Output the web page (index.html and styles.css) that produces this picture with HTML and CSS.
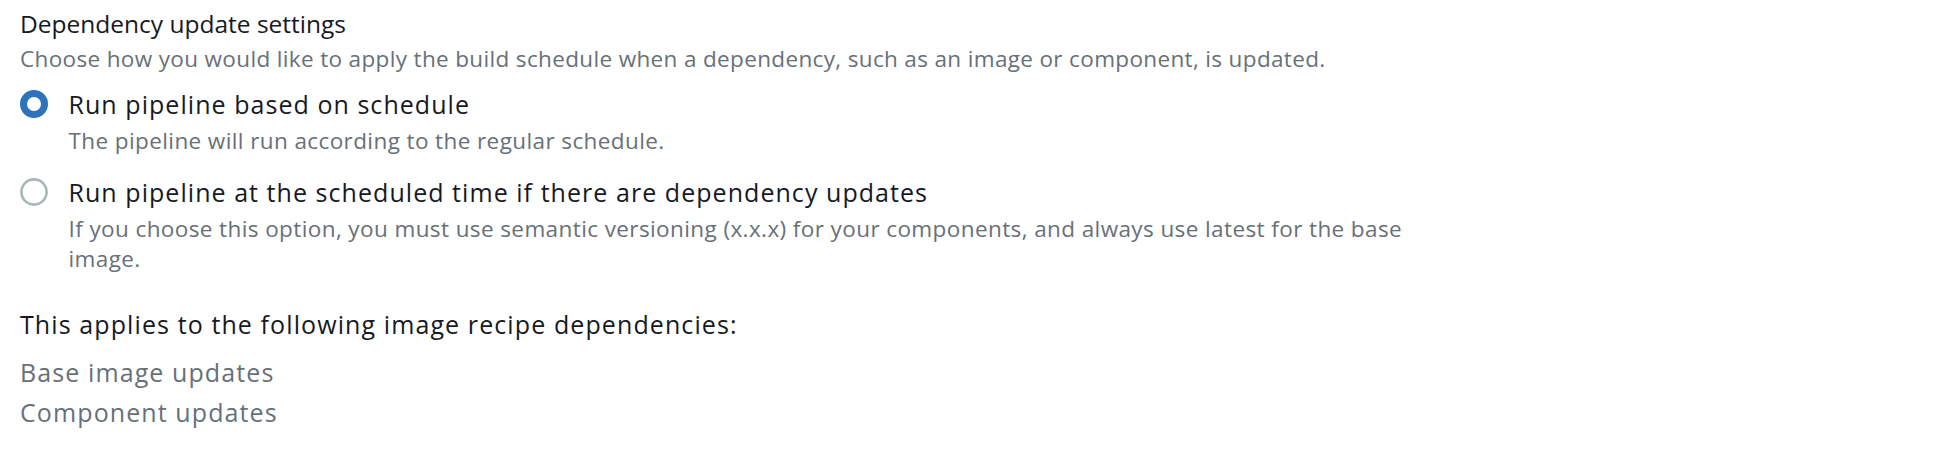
FILE: index.html
```html
<!DOCTYPE html>
<html lang="en">
<head>
<meta charset="utf-8">
<title>Dependency update settings</title>
<link rel="stylesheet" href="styles.css">
</head>
<body>
<div class="field">
  <div class="field-title">Dependency update settings</div>
  <div class="field-desc">Choose how you would like to apply the build schedule when a dependency, such as an image or component, is updated.</div>
  <div class="radio-group">
    <label class="radio">
      <span class="radio-control">
        <svg viewBox="0 0 16 16" width="28" height="28" aria-hidden="true"><circle cx="8" cy="8" r="6" fill="#fff" stroke="#2f72bc" stroke-width="4"/></svg>
      </span>
      <span class="radio-text">
        <span class="radio-label">Run pipeline based on schedule</span>
        <span class="radio-desc">The pipeline will run according to the regular schedule.</span>
      </span>
    </label>
    <label class="radio">
      <span class="radio-control">
        <svg viewBox="0 0 16 16" width="28" height="28" aria-hidden="true"><circle cx="8" cy="8" r="7.2" fill="#fff" stroke="#aab7b8" stroke-width="1.5"/></svg>
      </span>
      <span class="radio-text">
        <span class="radio-label">Run pipeline at the scheduled time if there are dependency updates</span>
        <span class="radio-desc">If you choose this option, you must use semantic versioning (x.x.x) for your components, and always use latest for the base image.</span>
      </span>
    </label>
  </div>
</div>
<div class="applies">
  <div class="applies-title">This applies to the following image recipe dependencies:</div>
  <ul class="dep-list">
    <li>Base image updates</li>
    <li>Component updates</li>
  </ul>
</div>
</body>
</html>
```
FILE: styles.css
```css
html, body {
  background: #ffffff;
}
body {
  margin: 0;
  padding: 9px 20px 0 20px;
  font-family: "Open Sans", "Noto Sans", Arial, sans-serif;
  color: #16191f;
}
.field {
  display: flex;
  flex-direction: column;
}
.field-title {
  font-size: 24.5px;
  line-height: 30px;
  color: #16191f;
}
.field-desc {
  margin-top: 5px;
  font-size: 22.5px;
  letter-spacing: 0.35px;
  line-height: 30px;
  color: #687078;
}
.radio-group {
  margin-top: 14.5px;
  display: flex;
  flex-direction: column;
  gap: 21.5px;
}
.radio {
  display: flex;
  align-items: flex-start;
}
.radio-control {
  width: 28px;
  height: 30px;
  margin-right: 20.5px;
  display: flex;
  align-items: center;
  justify-content: center;
  flex: none;
}
.radio-control svg {
  display: block;
}
.radio-text {
  display: flex;
  flex-direction: column;
  max-width: 1360px;
}
.radio-label {
  font-size: 25px;
  letter-spacing: 1.05px;
  line-height: 30px;
  color: #16191f;
}
.radio-desc {
  margin-top: 7px;
  font-size: 22.5px;
  letter-spacing: 0.4px;
  line-height: 30px;
  color: #687078;
}
.applies {
  margin-top: 35px;
}
.applies-title {
  font-size: 25px;
  letter-spacing: 1.1px;
  line-height: 30px;
  color: #16191f;
}
.dep-list {
  list-style: none;
  margin: 13px 0 0 0;
  padding: 0;
}
.dep-list li {
  font-size: 25px;
  letter-spacing: 1.1px;
  line-height: 40px;
  color: #687078;
}
```
